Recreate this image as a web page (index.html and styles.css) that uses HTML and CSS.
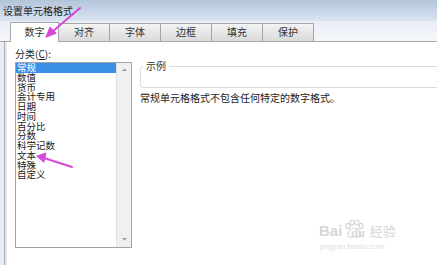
FILE: index.html
```html
<!DOCTYPE html>
<html lang="zh">
<head>
<meta charset="utf-8">
<link rel="stylesheet" href="styles.css">
</head>
<body>
<div class="window">
  <div class="titlebar">设置单元格格式</div>
  <div class="tabstrip">
    <div class="tab active">数字</div>
    <div class="tab">对齐</div>
    <div class="tab">字体</div>
    <div class="tab">边框</div>
    <div class="tab">填充</div>
    <div class="tab">保护</div>
  </div>
  <div class="panel">
    <div class="left">
      <div class="label">分类(<u>C</u>):</div>
      <div class="listbox">
        <ul class="items">
          <li class="sel">常规</li>
          <li>数值</li>
          <li>货币</li>
          <li>会计专用</li>
          <li>日期</li>
          <li>时间</li>
          <li>百分比</li>
          <li>分数</li>
          <li>科学记数</li>
          <li>文本</li>
          <li>特殊</li>
          <li>自定义</li>
        </ul>
        <div class="scrollbar">
          <svg class="sarrow" width="15" height="10" viewBox="0 0 15 10"><path d="M5 6 L7.5 3.5 L10 6 Z" fill="#9a9a9a"/></svg>
          <svg class="sarrow" width="15" height="10" viewBox="0 0 15 10"><path d="M5 4 L7.5 6.5 L10 4 Z" fill="#9a9a9a"/></svg>
        </div>
      </div>
    </div>
    <div class="right">
      <fieldset class="sample">
        <legend>示例</legend>
      </fieldset>
      <p class="desc">常规单元格格式不包含任何特定的数字格式。</p>
    </div>
  </div>
</div>

<div class="watermark">
  <div class="wm-logo">
    <span>Bai</span>
    <svg width="22" height="20" viewBox="0 0 22 20">
      <g fill="none" stroke="#d6d6d6" stroke-width="1.2">
        <ellipse cx="5" cy="7" rx="2" ry="2.6"/>
        <ellipse cx="9" cy="3.5" rx="2" ry="2.5"/>
        <ellipse cx="14" cy="3.5" rx="2" ry="2.5"/>
        <ellipse cx="18" cy="7" rx="2" ry="2.6"/>
        <path d="M5 16 C5 11 9 9 11.5 9 C14 9 18 11 18 16 C18 19 14 18 11.5 18 C9 18 5 19 5 16 Z"/>
      </g>
    </svg>
    <span class="du">du</span>
    <span class="jy">经验</span>
  </div>
  <div class="wm-url">jingyan.baidu.com</div>
</div>

<svg class="arrows" width="437" height="265" viewBox="0 0 437 265">
  <g stroke="#d649d6" stroke-width="2" fill="#d649d6" stroke-linecap="round">
    <line x1="80" y1="8" x2="52" y2="32"/>
    <path d="M46 37 L50 27 L56 33 Z" stroke-width="1"/>
    <line x1="72" y1="167" x2="44" y2="158"/>
    <path d="M37 156 L46 153 L44 162 Z" stroke-width="1"/>
  </g>
</svg>
</body>
</html>
```

FILE: styles.css
```css
* { box-sizing: border-box; }

html, body {
  margin: 0;
  padding: 0;
}

body {
  width: 437px;
  height: 265px;
  overflow: hidden;
  background: #e7edf5;
  font-family: "Noto Sans CJK SC", "Liberation Sans", sans-serif;
  font-size: 10px;
  color: #222;
  position: relative;
}

.window {
  display: flex;
  flex-direction: column;
  height: 265px;
}

.titlebar {
  height: 21px;
  padding: 5px 0 0 3px;
  line-height: 12px;
  font-size: 10px;
  color: #1e1e1e;
  background: linear-gradient(to bottom, #b3c4da 0%, #c6d5e7 50%, #d9e4f1 100%);
}

.tabstrip {
  height: 21px;
  display: flex;
  align-items: flex-end;
  padding-left: 10px;
  background: linear-gradient(to bottom, #e8eef6 0%, #f6f7f9 100%);
  border-bottom: 1px solid #a8a8a8;
}

.tab {
  width: 52px;
  height: 18px;
  margin-right: -1px;
  border: 1px solid #a5a5a5;
  border-bottom: none;
  background: linear-gradient(to bottom, #f4f4f4 0%, #e6e6e6 50%, #dadada 100%);
  text-align: center;
  line-height: 16px;
  font-size: 10px;
  color: #333;
}

.tab.active {
  width: 49px;
  height: 20px;
  margin-bottom: -1px;
  position: relative;
  z-index: 1;
  background: #ffffff;
  line-height: 18px;
}

.panel {
  flex: 1;
  display: flex;
  margin-left: 4px;
  border-left: 1px solid #a9a9a9;
  background: #ffffff;
  box-shadow: inset 2px 0 0 #e8e8e8;
}

.left {
  padding: 6px 0 0 10px;
}

.label {
  line-height: 12px;
  height: 12px;
  color: #222;
}

.listbox {
  margin-top: 2px;
  width: 117px;
  height: 186px;
  border: 1px solid #a3a3a3;
  display: flex;
  background: #fff;
}

.items {
  list-style: none;
  margin: 0;
  padding: 0;
  flex: 1;
}

.items li {
  height: 9.75px;
  line-height: 9.75px;
  padding-left: 1px;
  font-size: 9.5px;
  color: #1a1a1a;
  white-space: nowrap;
}

.items li.sel {
  background: #3a8ee6;
  color: #ffffff;
}

.scrollbar {
  width: 15px;
  background: #f0f0f0;
  border-left: 1px solid #e2e2e2;
  display: flex;
  flex-direction: column;
  justify-content: space-between;
  padding: 2px 0 3px;
}

.sarrow { display: block; }

.right {
  flex: 1;
  padding: 18px 0 0 8px;
}

.sample {
  margin: 0;
  margin-right: -10px;
  padding: 0;
  height: 28px;
  border: 1px solid #d6dde3;
  border-radius: 3px;
}

.sample legend {
  margin-left: 2px;
  padding: 0 3px;
  font-size: 10px;
  line-height: 12px;
  color: #333;
}

.desc {
  margin: 4px 0 0 0;
  line-height: 12px;
  font-size: 10px;
  color: #222;
}

.watermark {
  position: absolute;
  left: 319px;
  top: 219px;
  color: #d6d6d6;
}

.wm-logo {
  display: flex;
  align-items: flex-end;
  gap: 1px;
  font-family: "Liberation Sans", sans-serif;
  font-size: 15px;
  font-weight: bold;
  line-height: 16px;
}

.wm-logo .du {
  font-size: 11px;
  margin-left: -15px;
  margin-right: 4px;
  line-height: 12px;
}

.wm-logo .jy {
  font-family: "Noto Sans CJK SC", sans-serif;
  font-size: 13px;
  font-weight: normal;
  line-height: 16px;
}

.wm-url {
  margin-top: 3px;
  font-family: "Liberation Sans", sans-serif;
  font-size: 8px;
  line-height: 9px;
  color: #dedede;
  padding-left: 1px;
}

.arrows {
  position: absolute;
  left: 0;
  top: 0;
  z-index: 5;
  pointer-events: none;
}
```
